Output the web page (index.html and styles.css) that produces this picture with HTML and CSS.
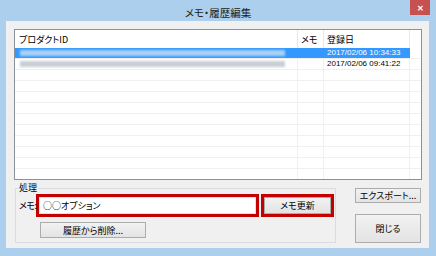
FILE: index.html
```html
<!DOCTYPE html>
<html lang="ja">
<head>
    <meta charset="UTF-8">
    <title>メモ・履歴編集</title>
    <link rel="stylesheet" href="styles.css">
</head>
<body>
    <div class="window">
        <div class="titlebar">
            <span></span>
            <span class="title">メモ・履歴編集</span>
            <span class="close-cell"><span class="close">✕</span></span>
        </div>
        <div class="client">
            <div class="list">
                <div class="row head">
                    <div class="cell c-id">プロダクトID</div>
                    <div class="cell c-memo">メモ</div>
                    <div class="cell c-date">登録日</div>
                    <div class="cell c-fill"></div>
                </div>
                <div class="row selected">
                    <div class="cell c-id"><span class="blur blur-sel"></span></div>
                    <div class="cell c-memo"></div>
                    <div class="cell c-date">2017/02/06 10:34:33</div>
                    <div class="cell c-fill"></div>
                </div>
                <div class="row">
                    <div class="cell c-id"><span class="blur"></span></div>
                    <div class="cell c-memo"></div>
                    <div class="cell c-date">2017/02/06 09:41:22</div>
                    <div class="cell c-fill"></div>
                </div>
                <div class="row"><div class="cell c-id"></div><div class="cell c-memo"></div><div class="cell c-date"></div><div class="cell c-fill"></div></div>
                <div class="row"><div class="cell c-id"></div><div class="cell c-memo"></div><div class="cell c-date"></div><div class="cell c-fill"></div></div>
                <div class="row"><div class="cell c-id"></div><div class="cell c-memo"></div><div class="cell c-date"></div><div class="cell c-fill"></div></div>
                <div class="row"><div class="cell c-id"></div><div class="cell c-memo"></div><div class="cell c-date"></div><div class="cell c-fill"></div></div>
                <div class="row"><div class="cell c-id"></div><div class="cell c-memo"></div><div class="cell c-date"></div><div class="cell c-fill"></div></div>
                <div class="row"><div class="cell c-id"></div><div class="cell c-memo"></div><div class="cell c-date"></div><div class="cell c-fill"></div></div>
                <div class="row"><div class="cell c-id"></div><div class="cell c-memo"></div><div class="cell c-date"></div><div class="cell c-fill"></div></div>
                <div class="row"><div class="cell c-id"></div><div class="cell c-memo"></div><div class="cell c-date"></div><div class="cell c-fill"></div></div>
                <div class="row"><div class="cell c-id"></div><div class="cell c-memo"></div><div class="cell c-date"></div><div class="cell c-fill"></div></div>
                <div class="row"><div class="cell c-id"></div><div class="cell c-memo"></div><div class="cell c-date"></div><div class="cell c-fill"></div></div>
            </div>
            <div class="bottom">
                <fieldset class="group">
                    <legend>処理</legend>
                    <div class="memo-row">
                        <label class="memo-label">メモ:</label>
                        <div class="mark input-mark"><input class="memo-input" value="○○オプション"></div>
                        <div class="mark btn-mark"><button class="btn">メモ更新</button></div>
                    </div>
                    <button class="btn delete">履歴から削除...</button>
                </fieldset>
                <div class="side">
                    <button class="btn export">エクスポート...</button>
                    <button class="btn close-btn">閉じる</button>
                </div>
            </div>
        </div>
    </div>
</body>
</html>
```

FILE: styles.css
```css
* {
    margin: 0;
    padding: 0;
    box-sizing: border-box;
}

body {
    width: 436px;
    height: 256px;
    overflow: hidden;
    font-family: "Noto Sans CJK JP", "Liberation Sans", sans-serif;
    font-size: 9px;
    font-feature-settings: "palt";
    color: #000;
}

.window {
    display: flex;
    flex-direction: column;
    width: 436px;
    height: 256px;
    background-color: #abcfec;
}

.titlebar {
    display: grid;
    grid-template-columns: 1fr auto 1fr;
    height: 21px;
}

.title {
    font-size: 10.5px;
    line-height: 21px;
    padding-top: 2px;
    color: #222;
}

.close-cell {
    justify-self: end;
    padding-right: 6px;
}

.close {
    display: block;
    width: 20px;
    height: 15px;
    background-color: #c75050;
    color: #fff;
    font-size: 8px;
    font-weight: bold;
    line-height: 15px;
    text-align: center;
}

.client {
    flex: 1;
    display: flex;
    flex-direction: column;
    margin: 0 7px 8px 6px;
    padding: 8px 7px 0 8px;
    background-color: #f0f0f0;
}

/* list view */
.list {
    height: 151px;
    border: 1px solid #8e8f99;
    background-color: #fff;
    overflow: hidden;
}

.row {
    display: flex;
    height: 11px;
    border-bottom: 1px solid #f0f0f0;
}

.row.head {
    height: 18px;
    border-bottom: none;
}

.cell {
    height: 100%;
    border-right: 1px solid #f0f0f0;
    font-family: "Liberation Sans", "Noto Sans CJK JP", sans-serif;
    font-size: 8px;
    line-height: 10px;
    white-space: nowrap;
    overflow: hidden;
}

.head .cell {
    font-family: "Noto Sans CJK JP", sans-serif;
    font-size: 9px;
    line-height: 18px;
    padding-top: 1px;
    border-right-color: #e8e8e8;
}

.c-id {
    width: 283px;
    padding-left: 4px;
}

.c-memo {
    width: 26px;
    padding-left: 3px;
}

.c-date {
    width: 86px;
    padding-left: 3px;
}

.c-fill {
    flex: 1;
    border-right: none;
}

.selected .c-id,
.selected .c-memo,
.selected .c-date {
    background-color: #3399ff;
    color: #fff;
    border-right-color: #3399ff;
}

.blur {
    display: block;
    width: 265px;
    height: 6px;
    margin: 2px 0 0 1px;
    background-color: #c9ced4;
    filter: blur(1.2px);
}

.blur.blur-sel {
    background-color: #a8d0f8;
}

/* bottom area */
.bottom {
    display: flex;
    margin-top: 3px;
}

.group {
    width: 321px;
    margin-left: 1px;
    padding: 1px 0 3px 3px;
    border: 1px solid #d8dde2;
}

.group legend {
    padding: 0 1px;
    margin-left: -1px;
    font-size: 9px;
    line-height: 10px;
}

.memo-row {
    display: flex;
    align-items: center;
    height: 23px;
}

.memo-label {
    position: relative;
    z-index: 1;
    width: 17px;
    letter-spacing: -0.5px;
    white-space: nowrap;
}

.mark {
    height: 23px;
    border: 3px solid #c40000;
}

.input-mark {
    width: 223px;
}

.memo-input {
    display: block;
    width: 100%;
    height: 100%;
    border: 1px solid #e2e2e2;
    padding-left: 3px;
    font-family: "Noto Sans CJK JP", sans-serif;
    font-size: 9px;
    font-feature-settings: "palt";
    background-color: #fff;
    outline: none;
}

.btn-mark {
    width: 73px;
    margin-left: 2px;
}

.btn {
    display: block;
    width: 100%;
    height: 100%;
    border: 1px solid #acacac;
    background: linear-gradient(#f2f2f2, #e3e3e3);
    font-family: "Noto Sans CJK JP", sans-serif;
    font-size: 9px;
    font-feature-settings: "palt";
    color: #000;
}

.delete {
    width: 106px;
    height: 16px;
    margin: 5px 0 0 21px;
}

.side {
    display: flex;
    flex-direction: column;
    gap: 11px;
    width: 66px;
    margin: 5px 0 0 19px;
}

.export {
    height: 15px;
}

.close-btn {
    height: 29px;
}
```
